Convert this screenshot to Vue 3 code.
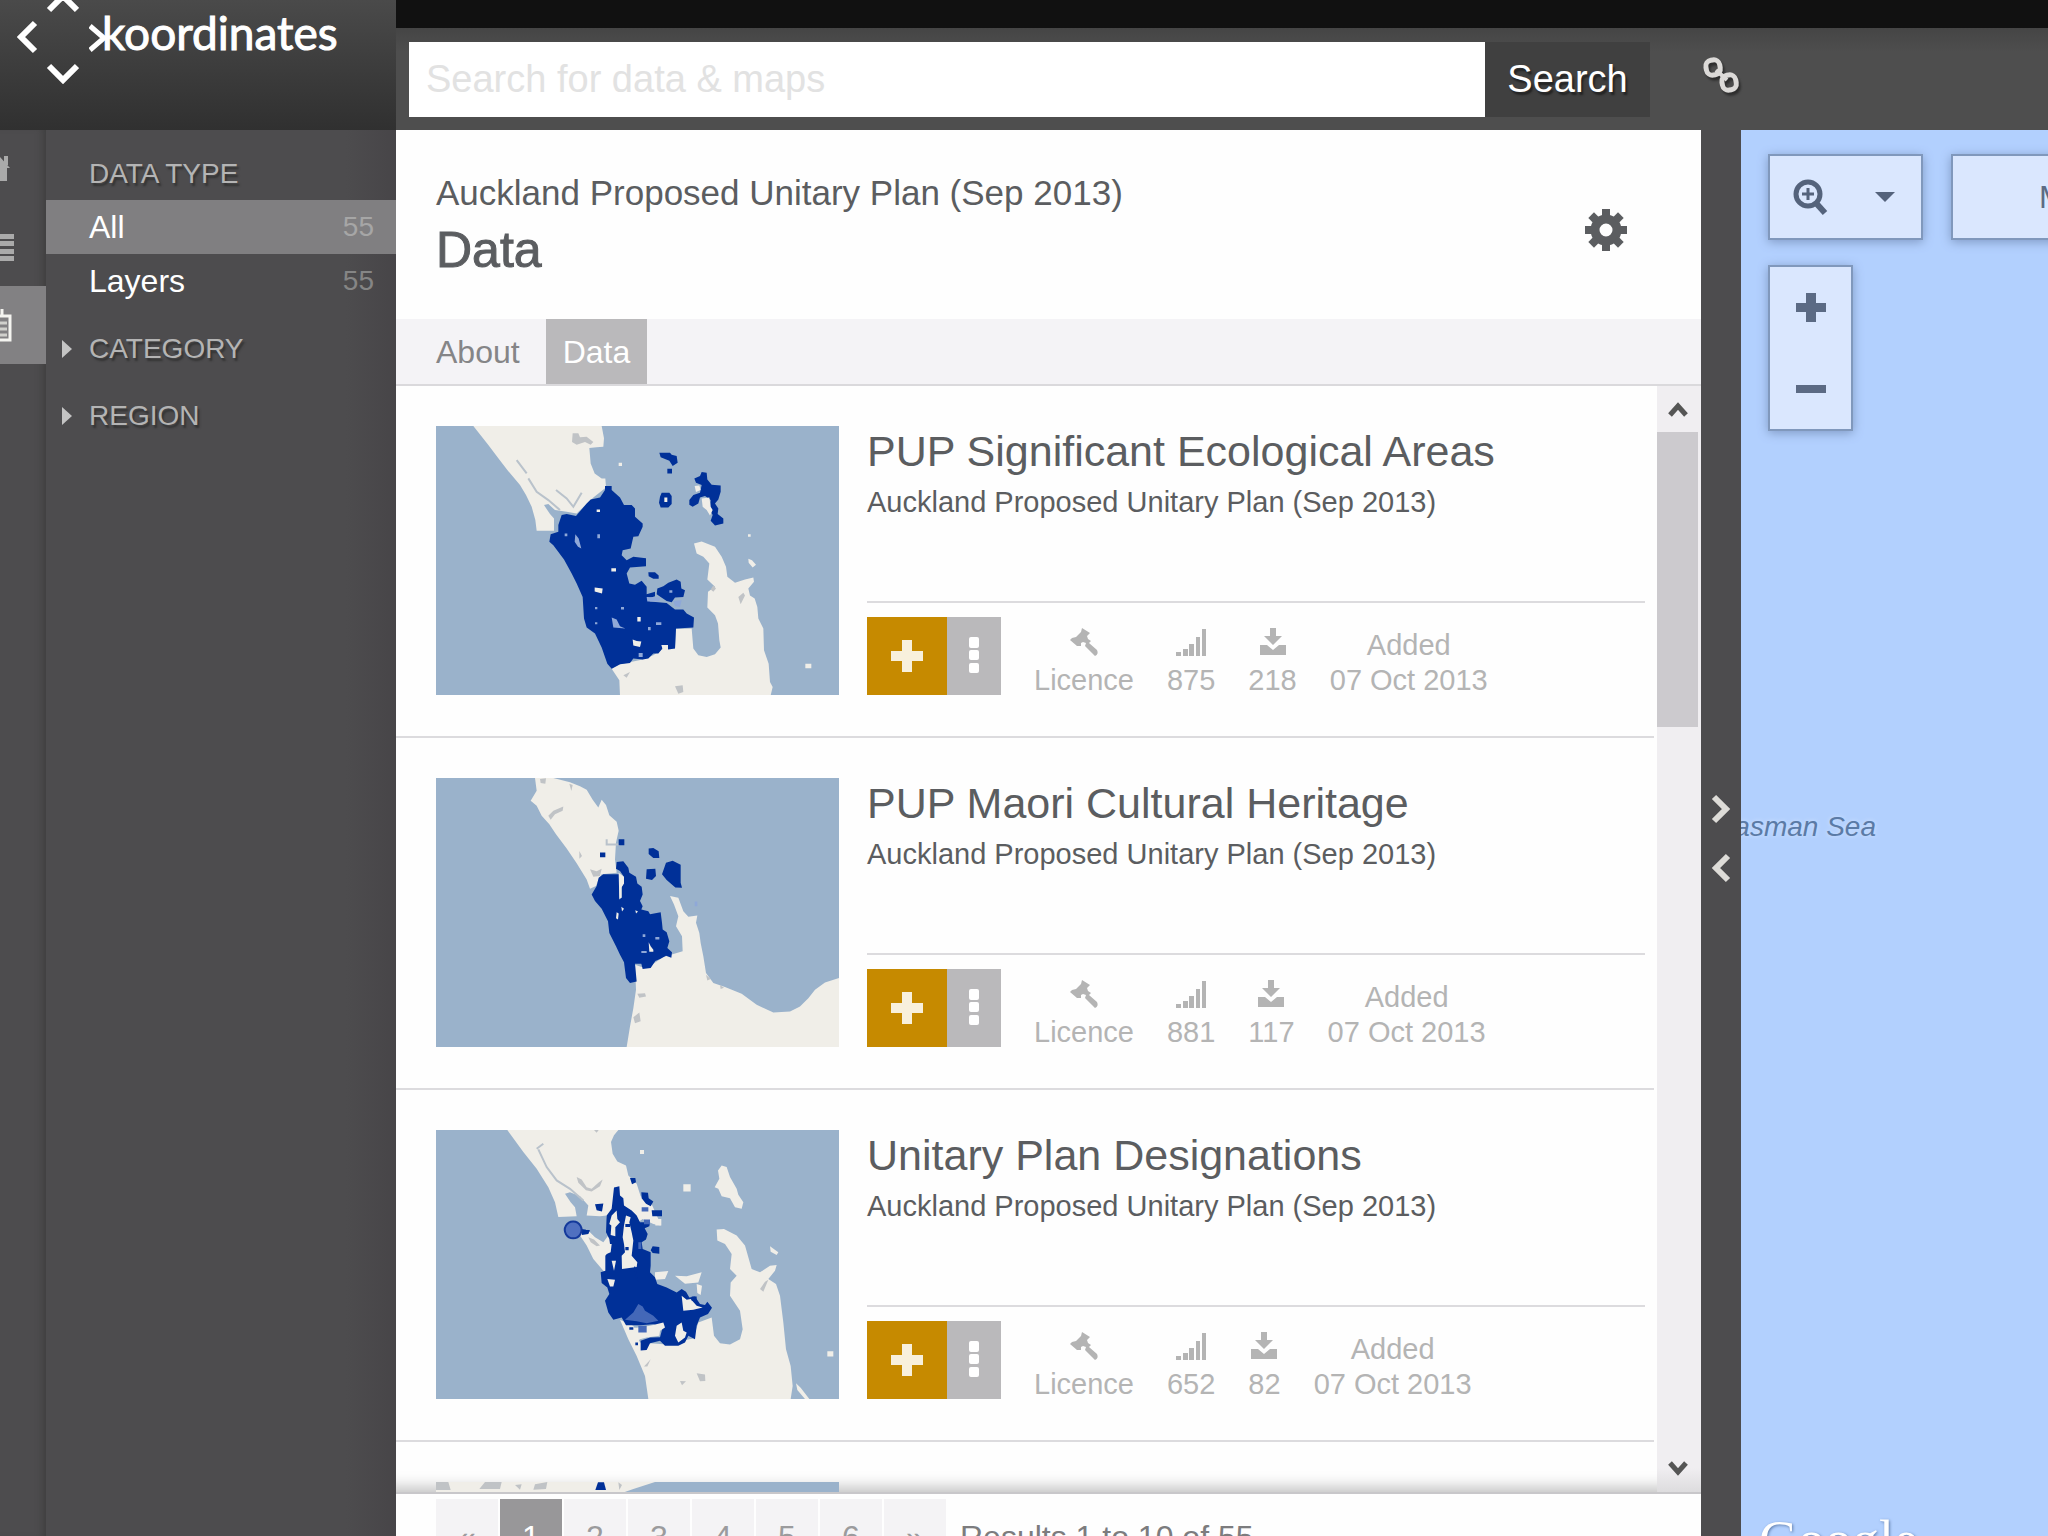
<script setup>
import { ref } from 'vue'

const query = ref('')

const dataTypes = [
  { label: 'All', count: 55, active: true },
  { label: 'Layers', count: 55, active: false }
]
const facets = ['CATEGORY', 'REGION']
const pages = ['«', '1', '2', '3', '4', '5', '6', '»']

const source = 'Auckland Proposed Unitary Plan (Sep 2013)'

const layers = [
  {
    title: 'PUP Significant Ecological Areas',
    views: 875,
    downloads: 218,
    added: '07 Oct 2013',
    box: '48 48 1209 806',
    shapes: [
      { c: 'land', d: 'M160 48H545L552 85L550 110L530 112L508 114L512 160L524 190L545 205H556L558 232L520 262L470 310L440 305L405 300L385 282L372 285L390 312L402 325V362H350L346 330L335 290L318 255L300 225L262 180L235 145L205 105Z' },
      { c: 'silt', d: 'M458 70H475L480 82L500 80L520 96L512 104L495 96L470 104L456 96Z' },
      { c: 'inlet', d: 'M325 205L350 245L385 270L420 300M408 240L440 265L460 290L485 248M290 150L320 190' },
      { c: 'land', d: 'M575 775L600 762L668 748L700 735L735 712L765 715L768 656L815 655L820 715L835 735L860 740L885 732L902 712L898 690L894 640L885 615L862 592L864 545L885 530L862 508L868 460L850 440L830 430L822 400L845 394L885 410L905 440L918 470L922 500L945 518L975 508L1000 502L1002 515L985 535L990 556L1004 565L1012 590L1015 625L1030 655L1032 720L1046 760L1050 815L1058 830L1052 855H600L598 810Z' },
      { c: 'silt', d: 'M765 828L788 825L790 845L775 850ZM880 525L888 535L880 545L872 538ZM955 560L970 548L975 556L962 582ZM610 795L630 785L620 802Z' },
      { c: 'data', d: 'M555 240V228H575V240L600 262L612 285H635L645 295V320L668 340V350L655 378L640 380L632 415L608 420L605 435L620 450L640 440L678 444V468L630 472L620 490L628 520L645 524L665 512L680 530V552L705 545V558L680 566L690 574L740 578L765 598H790L800 610L822 622L820 652L768 655L765 715L745 718L735 705L715 730H700L685 745L668 748L640 745L630 758L600 762L575 775L562 760L545 712L525 670L500 652L492 625L488 560L470 520L455 490L432 448L400 405L388 395L392 372L415 365V345L425 315L440 312L468 318L500 280L512 268L540 262Z' },
      { c: 'data', d: 'M718 128H750L755 134L770 138L773 158L758 168L748 152L722 142ZM742 176H756V190H742ZM725 248H748L755 258V282L745 292H722L717 278L720 260ZM823 205L840 198L845 186L860 188L862 208L875 224L902 226V245L895 268L885 280L895 295L893 312L910 325V340L885 346L872 332L878 315L870 300L872 270L855 258L840 262L835 280L818 290L808 284V270L820 255L840 248L845 225L828 218ZM685 486H705L716 496V506H700L686 498ZM712 535L730 528L745 518L770 508L782 515L784 535L795 540L790 560L765 562L755 576L740 572L722 560L710 552Z' },
      { c: 'land', d: 'M524 532L548 535L546 550L524 544ZM638 688L650 692L664 694L660 710L640 706ZM574 474H588V484H574ZM652 620H662V634H652ZM733 262H742V276H733ZM845 265L868 262L872 290L878 300L870 316L860 300L848 290ZM824 228L838 226L842 240L828 246ZM530 298H540V306H530ZM724 704H744V718H728ZM985 446L996 450L1008 464L998 472L986 458ZM1156 760H1174V774H1156ZM596 158H606V168H596ZM984 372H992V380H984Z' },
      { c: 'haze', d: 'M466 372L476 385L484 415L474 410L464 395ZM575 622L590 628L600 648L616 655L580 652ZM532 372H540V384H532ZM434 370H442V378H434ZM684 650H692V660H684ZM708 636H724V644H708ZM680 560L720 562L718 574H682ZM760 572L785 570L780 590L765 588ZM525 590H532V597H525ZM603 590H612V598H603ZM525 636H532V642H525ZM748 540H757V548H748ZM656 728H668V740H656Z' }
    ]
  },
  {
    title: 'PUP Maori Cultural Heritage',
    views: 881,
    downloads: 117,
    added: '07 Oct 2013',
    box: '48 57 1209 804',
    shapes: [
      { c: 'land', d: 'M345 57H400L450 70L480 82L500 92L518 122L535 145L545 122L558 138L568 168L590 188L596 215L588 250L585 300L590 340L545 345L535 362L528 380L510 388L500 360L470 312L440 268L408 225L388 195L365 170L350 140L332 125L350 95Z' },
      { c: 'silt', d: 'M385 170L400 155L430 142L428 155L405 165L392 182ZM360 60L378 58L376 74L362 72ZM448 74L458 78L454 96ZM478 275L486 290L478 298ZM510 330L530 336L545 328L540 350L520 352Z' },
      { c: 'inlet', d: 'M560 240V256H600' },
      { c: 'land', d: 'M645 615L665 622L700 612L730 592L788 575L786 530L768 500L775 470L762 435L750 410L775 415L790 455L805 472L832 468L828 490L838 520L842 550L850 590L858 640L880 670L915 682L965 702L1010 735L1060 758L1110 755L1140 740L1165 715L1185 690L1215 668L1257 655V861H620L630 800L640 745L648 690Z' },
      { c: 'silt', d: 'M652 702L675 700L678 710L658 714ZM640 772L658 758L662 784L645 790ZM858 645L872 658L862 662ZM900 676L912 684L902 688Z' },
      { c: 'data', d: 'M590 308L610 306L625 325L628 340L648 352L652 372L665 382L668 405L660 425L668 440L664 450L685 455L690 464L722 458L726 490L728 510L740 518L748 545L742 565L756 578L754 594L738 588L720 598L706 604L692 625L668 628L664 612L645 612L650 665L630 670L618 655L612 608L600 585L588 560L568 520L564 485L545 448L525 425L515 405L530 380L536 355L550 345H598V415H606V380L612 370L610 350L600 335L588 328ZM596 240H613V258H596ZM540 280H556V294H540ZM686 268L700 266L716 276L718 296L700 296L686 284ZM680 330L706 328L708 350L696 362L678 358ZM738 310L758 304L782 316V370L786 385L766 384L740 362L726 345Z' },
      { c: 'land', d: 'M596 340L612 352V372L604 385V415L598 420ZM590 458L596 462L594 480L588 476ZM686 548L692 560L700 570V576H688ZM604 442L612 448L606 456ZM646 452L654 456L648 462Z' },
      { c: 'haze', d: 'M664 574H680V580H664ZM706 532H718V540H706ZM668 524H676V532H668ZM824 426H832V440H824Z' }
    ]
  },
  {
    title: 'Unitary Plan Designations',
    views: 652,
    downloads: 82,
    added: '07 Oct 2013',
    box: '48 64 1209 805',
    shapes: [
      { c: 'land', d: 'M262 64H595L582 80L573 100L578 135L592 158L618 170L625 200L650 225L662 262L690 275L715 330L722 350L700 345L668 330L640 350L650 480L600 520L575 525L550 485L520 450L500 410L480 380L500 360L525 385L550 400L565 380L560 320L540 322L500 320L505 290L480 262L450 250L435 255L452 280L465 295L470 322L415 324L405 280L385 235L350 180L310 130Z' },
      { c: 'silt', d: 'M470 205L485 212L500 235L515 240L535 222L548 212L540 232L515 248L498 244L475 222ZM522 64H536L530 72ZM505 385L522 392L540 410L530 412L512 400Z' },
      { c: 'inlet', d: 'M355 122L380 175L410 215L450 240L490 275M350 120L370 105' },
      { c: 'land', d: 'M600 632L640 650L660 700L730 705L820 688L835 640L875 625L882 680L900 702L930 706L960 690L968 660L960 605L930 560L932 520L950 500L930 480L935 435L915 405L892 395L890 362L912 360L950 380L975 410L985 445L995 480L1020 490L1050 470L1070 468L1065 485L1045 510L1068 525L1080 560L1090 640L1098 720L1112 770L1118 830L1112 869H685L675 800L650 740L625 690Z' },
      { c: 'land', d: 'M905 170L920 175L930 205L950 240L955 258L970 280L965 300L945 295L930 268L905 262L895 240L884 235L898 210L894 185ZM790 226H812V248H790ZM1050 412L1075 430L1070 438L1052 428ZM1222 726H1240V742H1222ZM1128 822L1142 835L1168 869H1155L1132 842ZM705 490L745 486L735 510L705 512ZM765 500L800 502L845 490L835 520L795 524ZM830 525L846 530L842 558L832 552ZM660 124H672V136H660ZM706 330H724V350H706Z' },
      { c: 'silt', d: 'M1020 540L1035 518L1045 512L1030 548ZM830 792L855 796L856 815L840 816ZM672 772L692 750L682 772ZM780 815L798 816L786 828Z' },
      { c: 'data', d: 'M582 236L598 232L600 260L610 268L612 290L635 305L650 320L660 340H690L688 352L674 358L683 375L678 392L665 400L668 420L692 430V470L690 490L705 505L712 525L740 535L770 550L785 540L798 548L808 565L825 562L840 585L855 588L862 578L876 596L864 615L840 625L830 650L825 690L805 680L795 700L775 710H735L720 695L690 702L680 722L662 724V695L690 685L720 684L728 655L700 645L660 648L618 648L605 625L580 632L565 610L555 575L568 555L562 535L545 522L542 490L556 485V440L572 420L568 390L558 370L560 320L575 300ZM630 208H646L648 220L636 226ZM664 250L684 252L686 268L700 278L692 292L678 285L665 268ZM525 286L550 284L546 308L530 304ZM695 304H726V322H697ZM698 412L718 414V434L698 432L692 424ZM485 360L510 364L505 375L486 378Z' },
      { c: 'land', d: 'M575 320L590 305L592 330L600 340L586 355V382L572 378L574 350L568 345ZM612 350L618 320L632 325L628 340L635 370L640 395L635 440L652 460L650 474L606 480L605 440L615 430L612 405L608 385ZM560 405L575 405L572 430L558 436ZM660 300L685 290L695 300L680 312H665ZM785 560L800 572L812 570L830 590L848 595L820 602L790 605ZM770 650L785 640L790 665L800 670L795 685L775 700L765 680ZM610 655L650 656L690 650L730 640L735 655L720 665L718 680L680 685L660 690L650 700L640 680ZM575 455H588L582 485ZM562 510L585 512L580 532H570Z' },
      { c: 'mixed', d: 'M655 585L668 592L675 605L700 620L715 635L680 642L650 636L615 632L640 610Z' },
      { c: 'mixed', d: 'M655 650H680V670H655ZM665 295H685V308H665ZM672 332H690V346H672ZM655 400H664V420H655Z' },
      { c: 'data', d: 'M645 470L655 520L640 480ZM628 654H640V662H628ZM646 700H654V708H646ZM616 414H626V424H616ZM616 345H630V354H616ZM815 562H830V575H815Z' },
      { c: 'spot', d: 'M460 338A25 25 0 1 1 459 338Z' }
    ]
  },
  {
    box: '48 1121 1209 806',
    shapes: [
      { c: 'land', d: 'M48 1121H705L640 1142L560 1170L300 1300L48 1200Z' },
      { c: 'silt', d: 'M48 1121H85L92 1145H48ZM195 1121H245L240 1142H178ZM345 1128L382 1121L378 1142L340 1144ZM285 1130L305 1128L300 1144ZM595 1122L606 1130L598 1145Z' },
      { c: 'data', d: 'M534 1122H552L558 1145H526Z' }
    ]
  }
]
</script>

<template>
  <div class="app">
    <header class="top">
      <a class="brand" href="#" aria-label="koordinates">
        <svg class="compass" viewBox="0 0 62 84" fill="none" stroke="#fff" stroke-width="6">
          <path d="M18 23L4 37L18 51M32 10L46 -4L60 10M32 66L46 80L60 66" />
        </svg>
        <svg class="arms" viewBox="0 0 18 30" fill="none" stroke="#fff" stroke-width="5">
          <path d="M1 4L15 16L1 28" />
        </svg>
        <span class="word">koordinates</span>
      </a>
      <div class="tools">
        <div class="strip"></div>
        <div class="bar">
          <form class="search" @submit.prevent>
            <input v-model="query" type="text" placeholder="Search for data &amp; maps" aria-label="Search for data and maps" />
            <button type="submit">Search</button>
          </form>
          <button class="share" type="button" aria-label="Link">
            <svg viewBox="0 0 38 38" fill="none" stroke="#dcdad8" stroke-width="5">
              <rect x="4" y="4" width="14" height="15" rx="6" transform="rotate(-10 11 11)" />
              <rect x="20" y="19" width="14" height="15" rx="6" transform="rotate(-10 27 26)" />
              <path d="M14 14L25 24" stroke-width="4" />
            </svg>
          </button>
        </div>
      </div>
    </header>

    <div class="body">
      <nav class="rail" aria-label="Sections">
        <a href="#" aria-label="Home">
          <svg viewBox="0 0 28 34" fill="#aaa"><path d="M14 5L24 16H21V29H7V16H4ZM18 4H22V13H18Z" /></svg>
        </a>
        <a href="#" aria-label="List">
          <svg viewBox="0 0 28 34" fill="#aaa"><path d="M0 4H28V9H0ZM0 11H28V16H0ZM0 19H28V24H0ZM0 26H28V31H0Z" /></svg>
        </a>
        <a href="#" class="on" aria-label="Data">
          <svg viewBox="0 0 28 34" fill="none" stroke="#f4f4f0" stroke-width="3">
            <path d="M4 8H24V32H4ZM16 1V8" />
            <path d="M8 15H21M8 21H21M8 27H21" stroke="#d0d0cc" />
          </svg>
        </a>
      </nav>

      <aside class="filters">
        <h2>DATA TYPE</h2>
        <ul>
          <li v-for="t in dataTypes" :key="t.label">
            <a href="#" :class="{ on: t.active }">
              <span>{{ t.label }}</span><span class="count">{{ t.count }}</span>
            </a>
          </li>
        </ul>
        <button v-for="f in facets" :key="f" type="button" class="facet">
          <svg viewBox="0 0 10 18" fill="#c4c4c4"><path d="M0 0L10 9L0 18Z" /></svg>{{ f }}
        </button>
      </aside>

      <main class="panel">
        <div class="heading">
          <div>
            <p>{{ source }}</p>
            <h1>Data</h1>
          </div>
          <button type="button" class="gear" aria-label="Settings">
            <svg viewBox="-22 -22 44 44">
              <circle r="11" fill="none" stroke="#5b5d60" stroke-width="9" />
              <rect v-for="n in 8" :key="n" x="-4" y="-21" width="8" height="8" fill="#5b5d60" :transform="`rotate(${n * 45})`" />
            </svg>
          </button>
        </div>
        <div class="tabs">
          <a href="#">About</a>
          <a href="#" class="on">Data</a>
        </div>

        <div class="results">
          <div class="list">
            <article v-for="(l, i) in layers" :key="i" class="item">
              <svg class="thumb" :viewBox="l.box" preserveAspectRatio="none">
                <path v-for="(s, k) in l.shapes" :key="k" :class="s.c" :d="s.d" />
              </svg>
              <div v-if="l.title" class="info">
                <h3>{{ l.title }}</h3>
                <p>{{ source }}</p>
                <div class="actions">
                  <button type="button" class="add" aria-label="Add">
                    <svg viewBox="0 0 32 34" fill="#f8f0dc"><path d="M11 1H21V12H32V22H21V33H11V22H0V12H11Z" /></svg>
                  </button>
                  <button type="button" class="more" aria-label="More">
                    <svg viewBox="0 0 10 38" fill="#fff"><rect width="10" height="11" rx="2" /><rect y="13" width="10" height="10" rx="2" /><rect y="26" width="10" height="10" rx="2" /></svg>
                  </button>
                  <dl>
                    <div>
                      <dt>
                        <svg viewBox="0 0 30 28" fill="#b4b4b4"><path d="M13 0L21 5L18 8L19 11L22 13L20 15L28 22Q30 26 26 28L16 18L17 15L14 14L12 15L12 18L8 18L1 12L3 10L7 9L12 4Z" /></svg>
                      </dt>
                      <dd>Licence</dd>
                    </div>
                    <div>
                      <dt>
                        <svg viewBox="0 0 30 28" fill="#b4b4b4"><path d="M0 24H5V28H0ZM7 21H12V28H7ZM13 16H18V28H13ZM20 9H24V28H20ZM26 1H31V28H26Z" /></svg>
                      </dt>
                      <dd>{{ l.views }}</dd>
                    </div>
                    <div>
                      <dt>
                        <svg viewBox="0 0 30 28" fill="#b4b4b4"><path d="M12 0H18V8H24L15 17L6 8H12ZM2 17H9L15 22L21 17H28V27H2Z" /></svg>
                      </dt>
                      <dd>{{ l.downloads }}</dd>
                    </div>
                    <div>
                      <dt>Added</dt>
                      <dd>{{ l.added }}</dd>
                    </div>
                  </dl>
                </div>
              </div>
            </article>
          </div>
          <div class="scroll">
            <button type="button" aria-label="Scroll up">
              <svg viewBox="0 0 20 16" fill="none" stroke="#555" stroke-width="5"><path d="M2 14L10 5L18 14" /></svg>
            </button>
            <div class="handle"></div>
            <button type="button" class="down" aria-label="Scroll down">
              <svg viewBox="0 0 20 16" fill="none" stroke="#555" stroke-width="5"><path d="M2 2L10 11L18 2" /></svg>
            </button>
          </div>
        </div>

        <footer class="pager">
          <button v-for="p in pages" :key="p" type="button" :class="{ on: p === '1' }">{{ p }}</button>
          <span>Results 1 to 10 of 55</span>
        </footer>
      </main>

      <div class="split">
        <button type="button" aria-label="Expand panel">
          <svg viewBox="0 0 20 30" fill="none" stroke="#dedcd8" stroke-width="6"><path d="M3 3L15 15L3 27" /></svg>
        </button>
        <button type="button" aria-label="Collapse panel">
          <svg viewBox="0 0 20 30" fill="none" stroke="#dedcd8" stroke-width="6"><path d="M17 3L5 15L17 27" /></svg>
        </button>
      </div>

      <section class="map" aria-label="Map">
        <div class="controls">
          <button type="button" class="ctl zoomto" aria-label="Zoom to">
            <svg class="lens" viewBox="0 0 36 36" fill="none" stroke="#54637c">
              <circle cx="16" cy="15" r="12" stroke-width="5" />
              <path d="M24 24L33 34" stroke-width="6" />
              <path d="M16 9V21M10 15H22" stroke-width="3" />
            </svg>
            <svg class="caret" viewBox="0 0 20 10" fill="#54637c"><path d="M0 0H20L10 10Z" /></svg>
          </button>
          <button type="button" class="ctl kind">Map</button>
        </div>
        <div class="ctl zoom">
          <button type="button" aria-label="Zoom in">
            <svg viewBox="0 0 30 30" fill="#5b6a84"><path d="M10 0H20V10H30V19H20V29H10V19H0V10H10Z" /></svg>
          </button>
          <button type="button" aria-label="Zoom out">
            <svg viewBox="0 0 30 30" fill="#5b6a84"><path d="M0 11H30V19H0Z" /></svg>
          </button>
        </div>
        <span class="sea">Tasman Sea</span>
        <span class="google">Google</span>
      </section>
    </div>
  </div>
</template>

<style>
body {
  margin: 0;
  overflow: hidden;
}
</style>

<style scoped>
* {
  box-sizing: border-box;
}
.app {
  display: flex;
  flex-direction: column;
  height: 100vh;
  overflow: hidden;
  background: #4d4c4e;
  font-family: "Liberation Sans", Arial, sans-serif;
  color: #5b5d60;
}
h1, h2, h3, p, ul, dl, dd {
  margin: 0;
  padding: 0;
  font-weight: normal;
}
ul {
  list-style: none;
}
a {
  color: inherit;
  text-decoration: none;
}
button {
  display: flex;
  align-items: center;
  justify-content: center;
  margin: 0;
  padding: 0;
  border: 0;
  background: none;
  font: inherit;
  color: inherit;
}
svg {
  display: block;
  flex: none;
}

.top {
  display: flex;
  height: 130px;
}
.brand {
  display: flex;
  align-items: flex-start;
  width: 396px;
  padding-left: 17px;
  background: linear-gradient(#4a4a4a, #303030);
  color: #fff;
}
.compass {
  width: 62px;
  height: 84px;
}
.arms {
  width: 18px;
  height: 30px;
  margin: 22px 0 0 10px;
}
.word {
  margin-left: -5px;
  font-family: Lato, "Liberation Sans", sans-serif;
  font-size: 46px;
  line-height: 66px;
  -webkit-text-stroke: 1px #fff;
}
.tools {
  flex: 1;
}
.strip {
  height: 28px;
  background: #111;
}
.bar {
  display: grid;
  grid-template-columns: 1254fr 385fr;
  height: 102px;
  padding: 14px 0 13px 13px;
  background: linear-gradient(#454545, #4e4e4e 24px);
}
.search {
  display: flex;
  padding-right: 13px;
}
.search input {
  flex: 1;
  min-width: 0;
  padding: 0 17px;
  border: 0;
  background: #fff;
  font: inherit;
  font-size: 38px;
}
.search input::placeholder {
  color: #e2e2e2;
  opacity: 1;
}
.search button {
  width: 165px;
  background: #404040;
  color: #fff;
  font-size: 38px;
  text-shadow: 2px 3px 2px #222;
}
.share {
  width: 38px;
  height: 38px;
  margin: 14px 0 0 39px;
  filter: drop-shadow(2px 3px 1px #2d2d2d);
}
.share svg {
  width: 38px;
}

.body {
  flex: 1;
  display: grid;
  grid-template-columns: 46px 350px 1305fr 40px 307fr;
  min-height: 0;
}
.rail {
  overflow: hidden;
  box-shadow: inset -8px 0 8px -6px #3c3c3c;
}
.rail a {
  display: flex;
  align-items: center;
  justify-content: center;
  width: 92px;
  height: 78px;
  margin-left: -46px;
}
.rail a.on {
  background: #828183;
}
.rail svg {
  width: 28px;
  height: 34px;
}
.filters {
  background: linear-gradient(to right, transparent 300px, #474548);
  font-size: 28px;
  color: #b4b4b4;
}
.filters h2 {
  padding: 18px 0 0 43px;
  font-size: 28px;
  line-height: 52px;
  text-shadow: 2px 3px 2px #333;
}
.filters li a {
  display: flex;
  align-items: center;
  justify-content: space-between;
  height: 54px;
  padding: 0 22px 0 43px;
  color: #fff;
  font-size: 32px;
}
.filters li a.on {
  background: #807f81;
}
.filters .count {
  font-size: 28px;
  color: #858585;
}
.filters .on .count {
  color: #a6a6a6;
}
.facet {
  justify-content: flex-start;
  gap: 17px;
  margin-top: 15px;
  padding-left: 16px;
  line-height: 52px;
  text-shadow: 2px 3px 2px #333;
}
.facet svg {
  width: 10px;
  height: 18px;
}

.panel {
  display: flex;
  flex-direction: column;
  min-width: 0;
  min-height: 0;
  background: #fefefe;
}
.heading {
  display: flex;
  align-items: center;
  justify-content: space-between;
  padding: 43px 73px 32px 40px;
}
.heading p {
  font-size: 35px;
  line-height: 40px;
}
.heading h1 {
  font-size: 50px;
  line-height: 74px;
  -webkit-text-stroke: 1px #5b5d60;
}
.gear svg {
  width: 44px;
}
.tabs {
  display: flex;
  gap: 9px;
  height: 67px;
  padding-left: 23px;
  border-bottom: 2px solid #dad9dc;
  background: #f4f3f6;
  font-size: 32px;
  line-height: 66px;
  color: #858587;
}
.tabs a {
  padding: 0 17px;
}
.tabs .on {
  background: #bab9bb;
  color: #fff;
}
.results {
  flex: 1;
  display: flex;
  min-height: 0;
  overflow: hidden;
  box-shadow: inset 0 -20px 16px -16px #bbb;
}
.list {
  flex: 1;
  min-width: 0;
}
.item {
  display: flex;
  gap: 28px;
  height: 352px;
  margin-right: 3px;
  padding: 40px 9px 41px 40px;
  border-bottom: 2px solid #dcdbde;
}
.thumb {
  width: 403px;
  height: 269px;
  background: #9ab2cb;
}
.land {
  fill: #f0eee8;
}
.silt {
  fill: #c0c3c6;
}
.inlet {
  fill: none;
  stroke: #b9c2cb;
  stroke-width: 6;
}
.data {
  fill: #003098;
}
.haze {
  fill: #8fa8d8;
}
.mixed {
  fill: #4468b8;
}
.spot {
  fill: #5070c0;
  stroke: #14399b;
  stroke-width: 6;
}
.info {
  flex: 1;
  display: flex;
  flex-direction: column;
  min-width: 0;
}
.info h3 {
  font-size: 43px;
  line-height: 50px;
}
.info p {
  font-size: 29px;
  line-height: 52px;
}
.actions {
  display: flex;
  height: 94px;
  margin-top: auto;
  padding-top: 14px;
  border-top: 2px solid #dcdbde;
}
.add {
  width: 80px;
  height: 78px;
  background: #c68a00;
}
.add svg {
  width: 32px;
}
.more {
  width: 54px;
  height: 78px;
  background: #bab9bb;
}
.more svg {
  width: 10px;
}
.actions dl {
  display: flex;
  gap: 33px;
  padding: 11px 0 0 33px;
  color: #b4b4b4;
  font-size: 29px;
  line-height: 35px;
  text-align: center;
}
.actions dt {
  height: 35px;
}
.actions dt svg {
  width: 30px;
  height: 28px;
  margin: 0 auto;
}
.scroll {
  display: flex;
  flex-direction: column;
  width: 44px;
  padding-right: 3px;
  background: linear-gradient(#f0eef1 calc(100% - 24px), #dddcde);
}
.scroll svg {
  width: 20px;
  height: 16px;
}
.scroll button {
  height: 46px;
}
.scroll .down {
  margin-top: auto;
}
.handle {
  height: 295px;
  background: #cccace;
}
.pager {
  display: flex;
  gap: 2px;
  height: 44px;
  padding: 5px 0 0 40px;
  border-top: 2px solid #c8c7ca;
  overflow: hidden;
  font-size: 32px;
  line-height: 76px;
  color: #7c7c7e;
}
.pager button {
  width: 62px;
  height: 76px;
  background: #f4f3f5;
  color: #9b9b9d;
}
.pager button.on {
  background: #989799;
  color: #fff;
}
.pager span {
  margin-left: 12px;
}

.split {
  display: flex;
  flex-direction: column;
  align-items: center;
  justify-content: center;
  gap: 29px;
  padding-top: 10px;
}
.split svg {
  width: 20px;
  height: 30px;
}
.map {
  position: relative;
  min-width: 0;
  padding: 24px 0 0 27px;
  overflow: hidden;
  background: #b2d0fe;
}
.controls {
  display: flex;
  gap: 28px;
}
.ctl {
  flex: none;
  border: 2px solid #8098bc;
  background: #dae7fe;
  box-shadow: 0 2px 10px #8099c4;
  color: #5d6b84;
}
.zoomto {
  justify-content: space-between;
  width: 155px;
  height: 86px;
  padding: 0 26px 0 22px;
}
.lens {
  width: 36px;
}
.caret {
  width: 20px;
}
.kind {
  height: 86px;
  padding: 0 86px;
  font-size: 32px;
}
.zoom {
  width: 85px;
  margin-top: 25px;
}
.zoom button {
  width: 100%;
  height: 81px;
}
.zoom svg {
  width: 30px;
}
.sea {
  position: absolute;
  top: 680px;
  right: 172px;
  color: #5b7ba6;
  font-size: 28px;
  font-style: italic;
  line-height: 34px;
  text-shadow: 0 0 4px #d4e5ff;
  white-space: nowrap;
}
.google {
  position: absolute;
  bottom: -34px;
  left: 18px;
  color: #fff;
  font-family: "Liberation Serif", serif;
  font-size: 54px;
  line-height: 60px;
  text-shadow: 1px 1px 3px #5a78a8;
}
</style>
